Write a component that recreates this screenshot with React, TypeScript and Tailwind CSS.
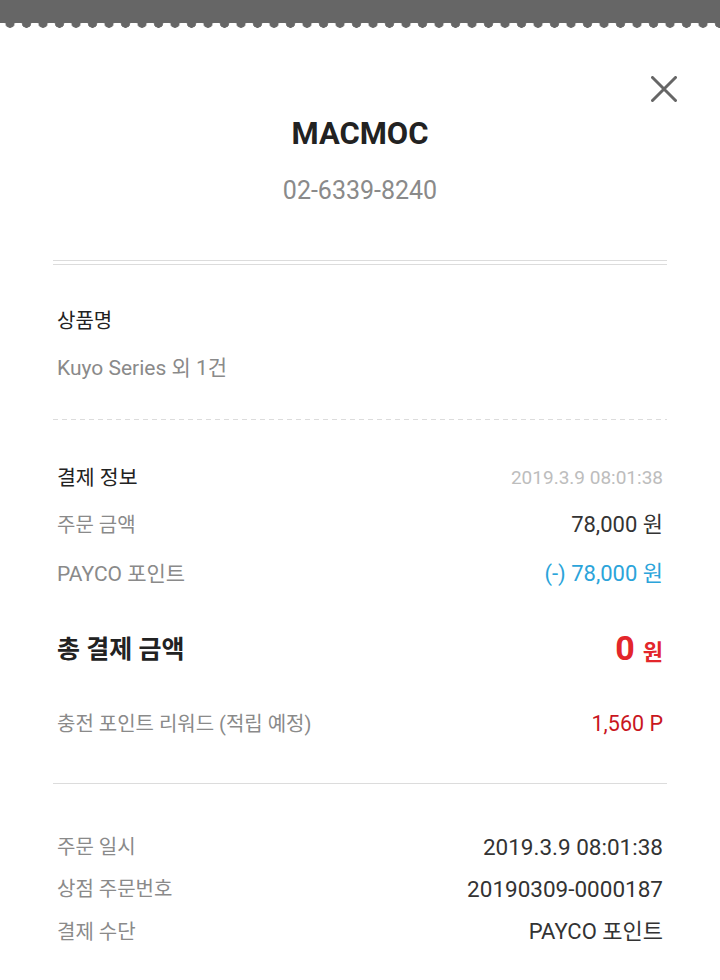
const font = { fontFamily: "Roboto, 'Noto Sans CJK KR', sans-serif" };

const Row = ({
  label,
  value,
  labelClass = "text-[20px] text-[#8a8a8a]",
  valueClass = "text-[22px] text-[#333]",
  className = "",
}: {
  label: string;
  value: React.ReactNode;
  labelClass?: string;
  valueClass?: string;
  className?: string;
}) => (
  <div className={`flex items-center justify-between px-1 h-[28px] ${className}`}>
    <span className={`leading-[28px] ${labelClass}`}>{label}</span>
    <span className={`leading-[28px] ${valueClass}`}>{value}</span>
  </div>
);

export default function App() {
  return (
    <div className="w-[720px] h-[980px] bg-white overflow-hidden" style={font}>
      {/* receipt top edge */}
      <div className="h-[23px] bg-[#666]" />
      <div className="h-[6px] bg-[radial-gradient(circle_at_50%_0,#666_4.5px,transparent_5px)] bg-[length:16.5px_6px] bg-[position:1.75px_0] bg-repeat-x" />

      <div className="relative px-[53px]">
        <button className="absolute right-[43px] top-[47px] text-[#666]">
          <svg width="26" height="26" viewBox="0 0 26 26" fill="none" stroke="currentColor" strokeWidth="3" strokeLinecap="round">
            <path d="M1.5 1.5 24.5 24.5M24.5 1.5 1.5 24.5" />
          </svg>
        </button>

        <div className="flex flex-col items-center pt-[85px]">
          <h1 className="text-[31px] leading-[40px] font-bold text-[#222]">MACMOC</h1>
          <p className="mt-[21px] text-[25px] leading-[32px] text-[#8a8a8a]">02-6339-8240</p>
        </div>

        <div className="mt-[53px] h-[5px] border-y border-[#dcdcdc]" />

        <div className="pt-[42px] px-1">
          <p className="text-[20px] leading-[28px] text-[#222]">상품명</p>
          <p className="mt-[19px] text-[21px] leading-[28px] text-[#8a8a8a]">Kuyo Series 외 1건</p>
        </div>

        <div className="mt-[37px] h-px bg-[repeating-linear-gradient(to_right,#dcdcdc_0_5px,transparent_5px_9px)]" />

        <div className="pt-[44px]">
          <Row
            label="결제 정보"
            labelClass="text-[20.5px] text-[#222]"
            value="2019.3.9 08:01:38"
            valueClass="text-[19px] text-[#bdbdbd]"
          />
          <Row className="mt-[19px]" label="주문 금액" value="78,000 원" />
          <Row
            className="mt-[21px]"
            label="PAYCO 포인트"
            labelClass="text-[21px] text-[#8a8a8a]"
            value="(-) 78,000 원"
            valueClass="text-[22px] text-[#2ba4da]"
          />

          <div className="mt-[42px] flex items-center justify-between px-1 h-[40px]">
            <span className="text-[25px] leading-[40px] font-bold text-[#222]">총 결제 금액</span>
            <span className="flex items-baseline text-[#e3262b] font-bold">
              <span className="text-[34px] leading-[40px]">0</span>
              <span className="ml-[8px] text-[22px] leading-[40px]">원</span>
            </span>
          </div>

          <Row
            className="mt-[40px]"
            label="충전 포인트 리워드 (적립 예정)"
            value="1,560 P"
            valueClass="text-[21.5px] text-[#c9161e]"
          />
        </div>

        <div className="mt-[45px] h-px bg-[#dcdcdc]" />

        <div className="pt-[49px]">
          <Row label="주문 일시" value="2019.3.9 08:01:38" valueClass="text-[22.5px] text-[#333]" />
          <Row className="mt-[14px]" label="상점 주문번호" value="20190309-0000187" valueClass="text-[22.5px] text-[#333]" />
          <Row className="mt-[15px]" label="결제 수단" value="PAYCO 포인트" valueClass="text-[22px] text-[#333]" />
        </div>
      </div>
    </div>
  );
}
